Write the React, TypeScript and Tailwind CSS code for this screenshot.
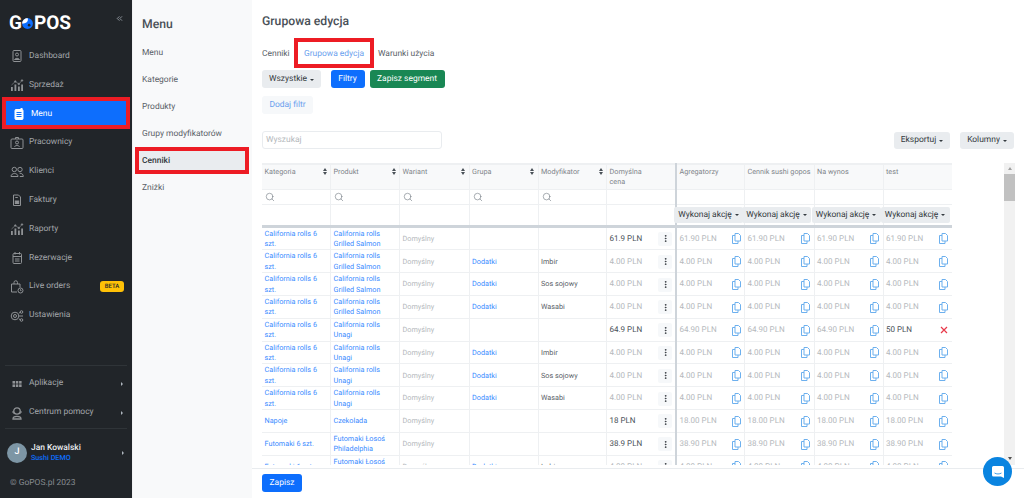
import React from "react";
import { ChevronsLeft, Search, EllipsisVertical } from "lucide-react";

const I = ({ children }: { children: React.ReactNode }) => (
  <svg width="14" height="14" viewBox="0 0 14 14" fill="none" stroke="currentColor" strokeWidth="1" className="shrink-0">{children}</svg>
);

const icons: Record<string, React.ReactNode> = {
  dashboard: <I><rect x="3" y="1.500" width="8" height="11" rx="1" /><circle cx="7" cy="5.500" r="1.500" /><path d="M4.500 10.500c.4-1.600 4.600-1.600 5 0z" /></I>,
  chart: (
    <svg width="14" height="14" viewBox="0 0 14 14" fill="currentColor" stroke="currentColor" strokeWidth="0.600" className="shrink-0">
      <rect x="1" y="9" width="1.800" height="4" stroke="none" />
      <rect x="4.500" y="6.500" width="1.800" height="6.500" stroke="none" />
      <rect x="8" y="8.500" width="1.800" height="4.500" stroke="none" />
      <rect x="11.200" y="6.500" width="1.800" height="6.500" stroke="none" />
      <path d="M1.500 7L5.300 3.500 8.800 6 12 2.500" fill="none" />
      <circle cx="5.300" cy="3.500" r="0.800" /><circle cx="8.800" cy="6" r="0.800" /><circle cx="12" cy="2.500" r="0.800" />
    </svg>
  ),
  menu: <I><rect x="3" y="2.500" width="8" height="10" rx="1" fill="currentColor" /><path d="M4.500 5.500h5M4.500 7.500h5M4.500 9.500h5" stroke="#0d6efd" /><path d="M8.500 1.500h2" /></I>,
  staff: <I><rect x="1" y="3" width="12" height="9.500" rx="1" /><path d="M5.500 3V1.500h3V3" /><circle cx="7" cy="6.500" r="1.500" /><path d="M4.500 11c.4-2 4.600-2 5 0" /></I>,
  clients: <I><circle cx="4.300" cy="4.500" r="2.200" /><circle cx="10" cy="4.500" r="2.200" /><path d="M1 11.500c0-4 7-4 7 0zM9.500 8.200c2.500 0 3.800 1.300 3.800 3.300H9.800" /></I>,
  invoice: <I><path d="M3.500 2h5l2 2v8.500h-7z" /><rect x="5.300" y="8" width="3.400" height="2.500" fill="currentColor" /><path d="M5.300 4.500h2.500" /></I>,
  calendar: <I><rect x="3" y="2.500" width="8.500" height="10" rx="1" /><path d="M3 5.500h8.500M5 1v2.500M9.500 1v2.500M5 8h4.500M5 10h4.500" /></I>,
  live: <I><path d="M1.500 4h8.500v3.500M1.500 4v8h5.500M4 4V2.500a1.500 1.500 0 0 1 3.500 0V4" /><circle cx="10.500" cy="10.500" r="2.500" /><path d="M10.500 9.300v1.300h1" /></I>,
  settings: <I><circle cx="5" cy="7" r="3.800" /><circle cx="5" cy="7" r="1.500" /><circle cx="11.500" cy="3" r="1.300" /><circle cx="11.500" cy="11" r="1.300" /><path d="M9 7h4M9 4l1.300-.6M9 10l1.300.6" /></I>,
  apps: <svg width="14" height="14" viewBox="0 0 14 14" fill="currentColor" className="shrink-0"><rect x="2.500" y="4" width="2.500" height="2.600" /><rect x="5.800" y="4" width="2.500" height="2.600" /><rect x="9.100" y="4" width="2.500" height="2.600" /><rect x="2.500" y="7.400" width="2.500" height="2.600" /><rect x="5.800" y="7.400" width="2.500" height="2.600" /><rect x="9.100" y="7.400" width="2.500" height="2.600" /></svg>,
  help: <I><circle cx="7" cy="5" r="3.200" strokeWidth="1.300" /><path d="M3.500 5h-.5v2h1M10.500 5h.5v2h-1" /><path d="M3 13c0-3.500 8-3.500 8 0z" strokeWidth="1.300" /></I>,
};

const SideItem = ({ icon, label, badge, arrow }: { icon: string; label: string; badge?: boolean; arrow?: boolean }) => (
  <div className="h-[28.8px] flex items-center pl-[10px] pr-[8px] pt-[2px] gap-[5px] text-[#a3a7ab] text-[8.450px]">
    <span className="w-[14px] flex justify-center text-[#8f9295]">{icons[icon]}</span>
    <span className="flex-1 whitespace-nowrap">{label}</span>
    {badge && <span className="bg-[#ffc107] text-[#212529] text-[6px] font-medium rounded-[3px] w-[24px] h-[11px] flex items-center justify-center">BETA</span>}
    {arrow && <span className="border-y-[2px] border-l-[2px] border-y-transparent border-l-[#adb5bd] mr-[1px]" />}
  </div>
);

const Caret = ({ c = "#343a40" }: { c?: string }) => (
  <span className="inline-block ml-[3px] align-middle border-x-[2.500px] border-t-[2.500px] border-x-transparent" style={{ borderTopColor: c }} />
);

const SortIcon = () => (
  <span className="flex flex-col gap-[1px] shrink-0">
    <span className="border-x-[2.500px] border-b-[3px] border-x-transparent border-b-[#495057]" />
    <span className="border-x-[2.500px] border-t-[3px] border-x-transparent border-t-[#495057]" />
  </span>
);

const CopyIcon = () => (
  <svg width="9" height="11" viewBox="0 0 9 11" fill="none" stroke="#6db0ee" strokeWidth="1" className="shrink-0 mr-[1px]">
    <path d="M3 .5h3.500l2 2V8H3z" />
    <path d="M3 2.500H.5V10.500H6V8" />
  </svg>
);

const RedX = () => (
  <svg width="8" height="8" viewBox="0 0 8 8" stroke="#e8394a" strokeWidth="1.200" className="shrink-0 mr-[1.500px]">
    <path d="M1 1l6 6M7 1L1 7" />
  </svg>
);

const widths = [68.500, 69, 69.500, 69, 68.500, 69.500, 68.500, 69.500, 69, 69];

type Row = { k: string; p: string; g?: boolean; m?: string; d: string; dark?: boolean; v: string[]; x?: boolean };
const cr = "California rolls 6 szt.";
const gs = "California rolls Grilled Salmon";
const un = "California rolls Unagi";
const p4 = ["4.00 PLN", "4.00 PLN", "4.00 PLN", "4.00 PLN"];
const rows: Row[] = [
  { k: cr, p: gs, d: "61.9 PLN", dark: true, v: ["61.90 PLN", "61.90 PLN", "61.90 PLN", "61.90 PLN"] },
  { k: cr, p: gs, g: true, m: "Imbir", d: "4.00 PLN", v: p4 },
  { k: cr, p: gs, g: true, m: "Sos sojowy", d: "4.00 PLN", v: p4 },
  { k: cr, p: gs, g: true, m: "Wasabi", d: "4.00 PLN", v: p4 },
  { k: cr, p: un, d: "64.9 PLN", dark: true, v: ["64.90 PLN", "64.90 PLN", "64.90 PLN", "50 PLN"], x: true },
  { k: cr, p: un, g: true, m: "Imbir", d: "4.00 PLN", v: p4 },
  { k: cr, p: un, g: true, m: "Sos sojowy", d: "4.00 PLN", v: p4 },
  { k: cr, p: un, g: true, m: "Wasabi", d: "4.00 PLN", v: p4 },
  { k: "Napoje", p: "Czekolada", d: "18 PLN", dark: true, v: ["18.00 PLN", "18.00 PLN", "18.00 PLN", "18.00 PLN"] },
  { k: "Futomaki 6 szt.", p: "Futomaki Łosoś Philadelphia", d: "38.9 PLN", dark: true, v: ["38.90 PLN", "38.90 PLN", "38.90 PLN", "38.90 PLN"] },
  { k: "Futomaki 6 szt.", p: "Futomaki Łosoś Philadelphia", g: true, m: "Imbir", d: "4.00 PLN", v: p4 },
];

const link = "text-[#3b8cff]";
const muted = "text-[#b4b8bc]";
const border = "border-r border-b border-[#eef0f2]";
const cellB = `${border} pt-[1px]`;
const headB = `${border} border-t-[2px] border-t-[#eef0f2] font-normal text-left pt-[2px]`;

const Cols = () => (
  <colgroup>
    {widths.map((w, i) => (
      <col key={i} style={{ width: w }} />
    ))}
  </colgroup>
);

export default function App() {
  return (
    <div className="h-screen w-full flex overflow-hidden bg-white text-[#495057] [text-rendering:geometricPrecision]" style={{ fontFamily: "Roboto, sans-serif" }}>
      <aside className="w-[132px] shrink-0 bg-[#212529] flex flex-col">
        <div className="h-[41px] flex items-center pl-[9px] pr-[8px] justify-between">
          <div className="flex items-center text-white font-bold text-[19px] leading-none mt-[4px]">
            <span>G</span>
            <svg width="13" height="13" viewBox="0 0 12 12" className="mx-[-0.500px] mt-[1px]">
              <circle cx="6" cy="6" r="5" fill="#0d6efd" />
              <path d="M1 6a5 5 0 0 1 5-5c1 2 0 4-2 4.500C3 5.800 2 6 1 6z" fill="#ffffff" />
              <circle cx="7.500" cy="7.500" r="1.200" fill="#212529" />
            </svg>
            <span>POS</span>
          </div>
          <ChevronsLeft size={9} className="text-[#adb5bd] mb-[4px]" />
        </div>
        <SideItem icon="dashboard" label="Dashboard" />
        <SideItem icon="chart" label="Sprzedaż" />
        <div className="h-[32px] my-[-1.600px] mx-[2px] border-[4px] border-[#ed1c24] relative">
          <div className="h-full bg-[#0d6efd] flex items-center pl-[6px] pt-[2px] gap-[5px] text-white text-[8.450px]">
            <span className="w-[14px] flex justify-center">{icons.menu}</span>
            <span>Menu</span>
          </div>
        </div>
        <SideItem icon="staff" label="Pracownicy" />
        <SideItem icon="clients" label="Klienci" />
        <SideItem icon="invoice" label="Faktury" />
        <SideItem icon="chart" label="Raporty" />
        <SideItem icon="calendar" label="Rezerwacje" />
        <SideItem icon="live" label="Live orders" badge />
        <SideItem icon="settings" label="Ustawienia" />
        <div className="flex-1" />
        <div className="mx-[5px] border-t border-[#2f3438]" />
        <div className="h-[2px]" />
        <SideItem icon="apps" label="Aplikacje" arrow />
        <SideItem icon="help" label="Centrum pomocy" arrow />
        <div className="mx-[5px] border-t border-[#2f3438] mt-[2px]" />
        <div className="h-[47px] flex items-center pl-[7px] pr-[8px] gap-[4px]">
          <span className="w-[20px] h-[20px] rounded-full bg-[#7d96a5] text-white text-[9px] font-medium flex items-center justify-center">J</span>
          <div className="flex-1 leading-[10px] pt-[1px]">
            <div className="text-[#e9ecef] text-[8.450px] font-medium">Jan Kowalski</div>
            <div className="text-[#0d6efd] text-[7.200px] font-medium">Sushi DEMO</div>
          </div>
          <span className="border-y-[2px] border-l-[2px] border-y-transparent border-l-[#adb5bd]" />
        </div>
        <div className="h-[22px] pl-[10px] pt-[1px] text-[8.450px] text-[#868b90]">© GoPOS.pl 2023</div>
      </aside>

      <nav className="w-[120px] shrink-0 bg-[#f8f9fa] border-l border-[#f0f1f2] pt-[15px] text-[8.450px] text-[#5a6168]">
        <div className="text-[12.200px] font-medium text-[#495057] pl-[9px] h-[23px] leading-[18px]">Menu</div>
        <div className="h-[27px] flex items-center pl-[9px] pt-[1px] mt-[1px]">Menu</div>
        <div className="h-[27px] flex items-center pl-[9px] pt-[1px]">Kategorie</div>
        <div className="h-[27px] flex items-center pl-[9px] pt-[1px]">Produkty</div>
        <div className="h-[27px] flex items-center pl-[9px] pt-[1px]">Grupy modyfikatorów</div>
        <div className="h-[27px] ml-[2px] mr-[3px] border-[4px] border-[#ed1c24] bg-[#e9ecef] flex items-center pl-[3px] pt-[1px] text-[#343a40] font-medium">Cenniki</div>
        <div className="h-[27px] flex items-center pl-[9px] pt-[1px]">Zniżki</div>
      </nav>

      <main className="flex-1 min-w-0 flex flex-col">
        <div className="flex-1 min-h-0 pl-[10px] pr-[10px] pt-[13px] flex flex-col">
          <h1 className="text-[12.200px] font-medium text-[#495057] leading-[17px]">Grupowa edycja</h1>
          <div className="flex items-center h-[30px] mt-[8px] text-[8.450px]">
            <span className="text-[#5a6168] w-[32px] pt-[2px]">Cenniki</span>
            <span className="h-[30px] w-[80px] border-[4px] border-[#ed1c24] flex items-center justify-center pt-[2px] text-[#6a9fee]">Grupowa edycja</span>
            <span className="ml-[4px] text-[#5a6168] pt-[2px]">Warunki użycia</span>
          </div>
          <div className="flex items-center h-[18px] mt-[2px] text-[8.450px]">
            <span className="w-[59px] h-[18px] rounded-[3px] pt-[1px] bg-[#e9ecef] flex items-center justify-center text-[#343a40]">Wszystkie<Caret /></span>
            <span className="ml-[9.500px] w-[34px] h-[18px] rounded-[3px] pt-[1px] bg-[#0d6efd] flex items-center justify-center text-white">Filtry</span>
            <span className="ml-[5px] w-[75px] h-[18px] rounded-[3px] pt-[1px] bg-[#198754] flex items-center justify-center text-white">Zapisz segment</span>
          </div>
          <div className="mt-[8px] w-[51px] h-[18px] rounded-[3px] pt-[1px] bg-[#f6f8fa] flex items-center justify-center text-[8.450px] text-[#6a9fee]">Dodaj filtr</div>
          <div className="flex items-center justify-between mt-[17px] h-[18px] text-[8.450px]">
            <div className="w-[180px] h-[18px] rounded-[3px] border border-[#e9ecef] flex items-center pl-[3px] pt-[1px] text-[#b4b8bc]">Wyszukaj</div>
            <div className="flex items-center gap-[10px]">
              <span className="w-[56px] h-[17px] rounded-[3px] pt-[1px] bg-[#e9ecef] flex items-center justify-center text-[#343a40]">Eksportuj<Caret /></span>
              <span className="w-[54px] h-[17px] rounded-[3px] pt-[1px] bg-[#e9ecef] flex items-center justify-center text-[#343a40]">Kolumny<Caret /></span>
            </div>
          </div>
          <div className="flex mt-[14px] flex-1 min-h-0">
            <div className="w-[690px] shrink-0 overflow-hidden h-[302px] relative">
              <table className="table-fixed border-collapse w-[690px] text-[7.250px] leading-[10.400px]">
                <Cols />
                <thead>
                  <tr className="h-[25px] bg-[#f8f9fa] text-[#7f858a] align-top">
                    {["Kategoria", "Produkt", "Wariant", "Grupa", "Modyfikator"].map((t) => (
                      <th key={t} className={`${headB} px-[2.500px]`}>
                        <div className="flex items-start justify-between pr-[1px]">
                          <span>{t}</span>
                          <span className="mt-[1px]"><SortIcon /></span>
                        </div>
                      </th>
                    ))}
                    <th className={`${headB} border-r-[2px] border-r-[#ced4da] px-[2.500px]`}>Domyślna<br />cena</th>
                    {["Agregatorzy", "Cennik sushi gopos", "Na wynos", "test"].map((t) => (
                      <th key={t} className={`${headB} pl-[2.500px] whitespace-nowrap overflow-hidden`}>{t}</th>
                    ))}
                  </tr>
                  <tr className="h-[15px]">
                    {widths.map((_, i) => (
                      <td key={i} className={`${border} pl-[2px] ${i === 5 ? "border-r-[2px] border-r-[#ced4da]" : ""}`}>
                        {i < 5 && <Search size={10} strokeWidth={1.400} className="text-[#6c757d] ml-[1px]" />}
                      </td>
                    ))}
                  </tr>
                  <tr className="h-[22px] border-b-[3px] border-[#ced4da]">
                    {widths.map((_, i) => (
                      <td key={i} className={`border-r border-[#eef0f2] ${i === 5 ? "border-r-[2px] border-r-[#ced4da]" : ""} p-0`}>
                        {i >= 6 && (
                          <span className="flex items-center justify-center h-[16px] pt-[1px] w-[69px] ml-[-3px] rounded-[2px] bg-[#e9ecef] text-[#343a40] text-[8.450px] whitespace-nowrap relative">
                            Wykonaj akcję<Caret />
                          </span>
                        )}
                      </td>
                    ))}
                  </tr>
                </thead>
                <tbody>
                  {rows.map((r, ri) => (
                    <tr key={ri} className="h-[22.700px]">
                      <td className={`${cellB} ${link} px-[2.500px]`}>{r.k}</td>
                      <td className={`${cellB} ${link} px-[2.500px]`}>{r.p}</td>
                      <td className={`${cellB} ${muted} px-[2.500px]`}>Domyślny</td>
                      <td className={`${cellB} ${link} px-[2.500px]`}>{r.g ? "Dodatki" : ""}</td>
                      <td className={`${cellB} text-[#5a6168] px-[2.500px]`}>{r.m ?? ""}</td>
                      <td className={`${cellB} border-r-[2px] border-r-[#ced4da] pl-[2.500px] pr-[3px] text-[8px]`}>
                        <div className="flex items-center justify-between">
                          <span className={r.dark ? "text-[#495057]" : muted}>{r.d}</span>
                          <span className="w-[14px] h-[14px] rounded-[2px] bg-[#f6f8fa] flex items-center justify-center">
                            <EllipsisVertical size={9} strokeWidth={2.500} className="text-[#343a40]" />
                          </span>
                        </div>
                      </td>
                      {r.v.map((v, i) => {
                        const isX = r.x && i === 3;
                        return (
                          <td key={i} className={`${cellB} pl-[2.500px] pr-[2.500px] text-[8px]`}>
                            <div className="flex items-center justify-between">
                              <span className={isX ? "text-[#495057]" : muted}>{v}</span>
                              {isX ? <RedX /> : <CopyIcon />}
                            </div>
                          </td>
                        );
                      })}
                    </tr>
                  ))}
                </tbody>
              </table>
            </div>
            <div className="ml-[52px] w-[11px] h-[302px] bg-[#f1f1f1] flex flex-col items-center shrink-0">
              <span className="mt-[4px] border-x-[2.500px] border-b-[3px] border-x-transparent border-b-[#a0a0a0]" />
              <div className="w-full h-[27px] bg-[#c1c1c1] mt-[4px]" />
              <div className="flex-1" />
              <span className="mb-[5px] border-x-[2.500px] border-t-[3px] border-x-transparent border-t-[#505050]" />
            </div>
          </div>
        </div>
        <div className="h-[30px] shrink-0 border-t border-[#e9ecef] pl-[10px] pt-[5px]">
          <span className="w-[40px] h-[18px] rounded-[3px] pt-[1px] bg-[#0d6efd] flex items-center justify-center text-white text-[8.450px]">Zapisz</span>
        </div>
      </main>

      <div className="absolute left-[983px] top-[457px] w-[29px] h-[29px] rounded-full bg-[#0a84e0] flex items-center justify-center">
        <svg width="14" height="14" viewBox="0 0 14 14">
          <path d="M2.500 1h9A1.500 1.500 0 0 1 13 2.500V13l-3-1.500H2.500A1.500 1.500 0 0 1 1 10V2.500A1.500 1.500 0 0 1 2.500 1z" fill="#ffffff" />
          <path d="M3.500 8c2 1.300 5 1.300 7 0" stroke="#0a84e0" strokeWidth="0.800" fill="none" />
        </svg>
      </div>
    </div>
  );
}
